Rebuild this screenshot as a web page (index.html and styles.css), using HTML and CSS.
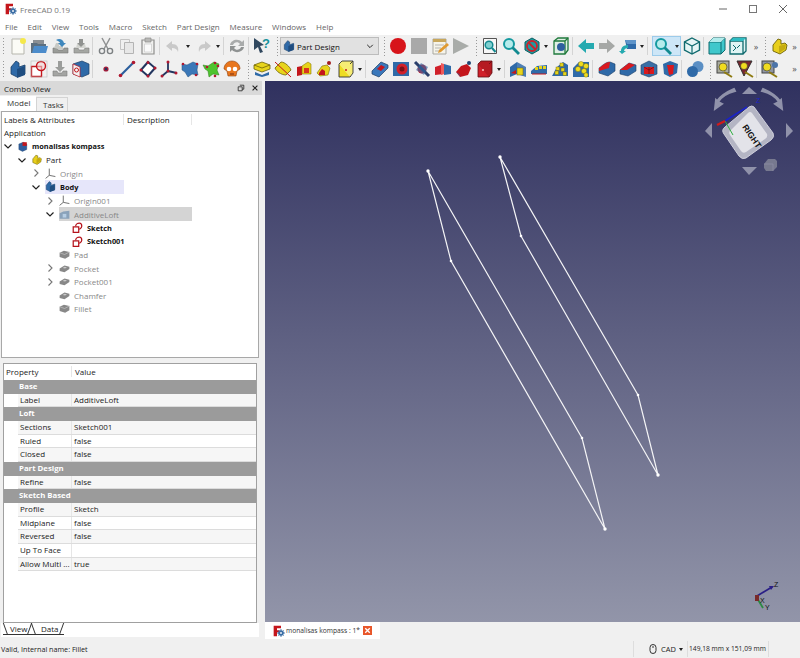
FILE: index.html
```html
<!DOCTYPE html>
<html lang="en">
<head>
<meta charset="utf-8">
<title>FreeCAD 0.19</title>
<link rel="stylesheet" href="styles.css">
</head>
<body>
<svg class="sprite" xmlns="http://www.w3.org/2000/svg">
  <defs>
    <symbol id="logo" viewBox="0 0 18 18"><path d="M1 1h11v4H6v3h4v3H6v6H1z" fill="#c4161c"/><circle cx="12" cy="12" r="4.2" fill="#3a6ea5"/><circle cx="12" cy="12" r="1.6" fill="#e8eef5"/><path d="M12 6v12M6 12h12M8 8l8 8M16 8l-8 8" stroke="#3a6ea5" stroke-width="1.3"/><circle cx="12" cy="12" r="1.5" fill="#e8eef5"/></symbol>
    <symbol id="new" viewBox="0 0 18 18"><path d="M3 2h10l2 2v13H3z" fill="#fbfbf6" stroke="#b5b5ad"/><circle cx="14" cy="4" r="3" fill="#f5e84a"/></symbol>
    <symbol id="open" viewBox="0 0 18 18"><path d="M3 3h11v4H3z" fill="#8a8f94"/><path d="M1 6h6l1 1h8v9H1z" fill="#5c6f80"/><path d="M2 16l2-7h14l-2 7z" fill="#4c8ccb"/></symbol>
    <symbol id="save" viewBox="0 0 18 18"><path d="M2 11h4l1 2h5l1-2h4v5H2z" fill="#9a9c98" stroke="#777"  stroke-width=".6"/><path d="M3 11l2-5h3v3h4v3H7z" fill="#c9cac6"/><path d="M5 3c3-2 7-1 8 3h2l-4 4-4-4h2c0-1-2-2-4-3z" fill="#3f87bd"/></symbol>
    <symbol id="saveas" viewBox="0 0 18 18"><path d="M2 11h4l1 2h5l1-2h4v5H2z" fill="#a5a7a3" stroke="#808080" stroke-width=".6"/><path d="M4 11l1-4h8l1 4z" fill="#d3d4d0"/><path d="M7 2h4v4h2l-4 4-4-4h2z" fill="#909290"/></symbol>
    <symbol id="cut" viewBox="0 0 18 18"><path d="M5 1l6 11M13 1l-6 11" stroke="#8f9192" stroke-width="1.5" fill="none"/><circle cx="5" cy="14" r="2.6" fill="none" stroke="#7d8183" stroke-width="1.4"/><circle cx="13" cy="14" r="2.6" fill="none" stroke="#7d8183" stroke-width="1.4"/></symbol>
    <symbol id="copy" viewBox="0 0 18 18"><path d="M2.500 2.500h9v10h-9z" fill="#f0f0f0" stroke="#c4c4c4"/><path d="M6.500 5.500h9v11h-9z" fill="#e7e7e7" stroke="#b4b4b4"/></symbol>
    <symbol id="paste" viewBox="0 0 18 18"><path d="M3 3h12v14H3z" fill="#f1f1ef" stroke="#8e8e8c" stroke-width="1.200"/><path d="M6 1h6v4H6z" fill="#b8b8b6" stroke="#8e8e8c" stroke-width=".7"/><path d="M5.500 7h7v8h-7z" fill="#fafafa" stroke="#c4c4c4" stroke-width=".6"/></symbol>
    <symbol id="undo" viewBox="0 0 18 18"><path d="M8 4L2 9l6 5v-3c3 0 5 1 6 4 1-5-1-8-6-8z" fill="#c9c9c9"/></symbol>
    <symbol id="redo" viewBox="0 0 18 18"><path d="M10 4l6 5-6 5v-3c-3 0-5 1-6 4-1-5 1-8 6-8z" fill="#c9c9c9"/></symbol>
    <symbol id="refresh" viewBox="0 0 18 18"><path d="M2 8c1-5 8-7 12-3l2-2v6h-6l2-2c-2-3-6-2-7 1z" fill="#a9abab"/><path d="M16 10c-1 5-8 7-12 3l-2 2V9h6l-2 2c2 3 6 2 7-1z" fill="#8f9292"/></symbol>
    <symbol id="what" viewBox="0 0 18 18"><path d="M1 1l10 7-4 1 3 6-3 1-2-6-4 3z" fill="#30475e"/><text x="9" y="11" class="qm">?</text></symbol>
    <symbol id="record" viewBox="0 0 18 18"><circle cx="9" cy="9" r="8" fill="#d7141a"/></symbol>
    <symbol id="stop" viewBox="0 0 18 18"><rect x="1" y="1" width="16" height="16" fill="#a9a9a9"/></symbol>
    <symbol id="macro" viewBox="0 0 18 18"><path d="M2 2h13v15H2z" fill="#f6f4ea" stroke="#a9a8a0"/><path d="M2 2h13v3H2z" fill="#c8a75c"/><path d="M4 8h9M4 11h6M4 14h5" stroke="#b5b5b0"/><path d="M8 13l8-7 2 2-8 7-3 1z" fill="#e09a30"/></symbol>
    <symbol id="play" viewBox="0 0 18 18"><path d="M1 1l16 8-16 8z" fill="#a9aca9"/></symbol>
    <symbol id="fitall" viewBox="0 0 18 18"><path d="M2.500 1.500h13v15h-13z" fill="#f7f7f7" stroke="#555"/><circle cx="8" cy="8" r="3.800" fill="#7fd0d0" stroke="#128a90" stroke-width="1.500"/><path d="M11 11l3.500 4" stroke="#128a90" stroke-width="2"/></symbol>
    <symbol id="mag" viewBox="0 0 18 18"><circle cx="7" cy="7" r="5" fill="#b6ecec" stroke="#159aa0" stroke-width="2"/><path d="M10.500 10.500L17 17" stroke="#128a90" stroke-width="2.800"/></symbol>
    <symbol id="draw" viewBox="0 0 18 18"><path d="M9 1l7 4v8l-7 4-7-4V5z" fill="#1b9ba0" stroke="#0c5f62"/><circle cx="9" cy="9" r="5" fill="none" stroke="#c9232c" stroke-width="1.800"/><path d="M5.500 5.500l7 7" stroke="#c9232c" stroke-width="1.800"/></symbol>
    <symbol id="bbox" viewBox="0 0 18 18"><path d="M2 4l4-3h10v12l-3 4H2z" fill="#e0efe4" stroke="#1f7a3c" stroke-width="1.300"/><path d="M2 4h11v13M13 4l3-3" fill="none" stroke="#1f7a3c" stroke-width="1.300"/><circle cx="9" cy="10" r="4" fill="#2f5f9f"/></symbol>
    <symbol id="back" viewBox="0 0 18 18"><path d="M1 9l8-7v4h8v6H9v4z" fill="#25aab0"/></symbol>
    <symbol id="fwd" viewBox="0 0 18 18"><path d="M17 9L9 2v4H1v6h8v4z" fill="#a6a8a6"/></symbol>
    <symbol id="home" viewBox="0 0 18 18"><path d="M6 3h11v9H8z" fill="#2f6aa8"/><path d="M6 3l2 4h9V3z" fill="#5e94c9"/><path d="M9 8c-4 0-7 2-7 6H0l3 3 4-3H5c0-2 2-3 4-3z" fill="#25aab0"/></symbol>
    <symbol id="iso" viewBox="0 0 18 18"><path d="M9 1l7.500 4v8L9 17l-7.500-4V5z" fill="#e6f5f5" stroke="#0f6a6e" stroke-width="1.400"/><path d="M1.500 5L9 9l7.500-4M9 9v8" fill="none" stroke="#0f6a6e" stroke-width="1.200"/></symbol>
    <symbol id="front" viewBox="0 0 18 18"><path d="M1 5l4-4h12v12l-4 4H1z" fill="#40c8cc" stroke="#0f6a6e"/><path d="M1 5h12v12M13 5l4-4" fill="none" stroke="#0f6a6e"/><path d="M1 5l4-4h12l-4 4z" fill="#b2ecec"/></symbol>
    <symbol id="top" viewBox="0 0 18 18"><path d="M1 4h13v13H1zM1 4l3-3h13v13l-3 3" fill="#dff4f4" stroke="#0f6a6e" stroke-width="1.300"/><path d="M1 4l3-3h13l-3 3z" fill="#2fbcc2"/><path d="M4 8l3 3-3 3M11 8l-3 3" fill="none" stroke="#0f6a6e"/></symbol>
    <symbol id="part" viewBox="0 0 18 18"><path d="M3 8l5-6 3 1v4l4-1 2 2-1 5-6 4-7-3z" fill="#e8cf1c" stroke="#6e6208" stroke-width=".9"/><path d="M9 9l7-2-1 5-6 4z" fill="#c4ab10"/></symbol>
    <symbol id="body" viewBox="0 0 18 18"><path d="M2 7l5-6 3 2v4l6-2v9l-8 3-6-3z" fill="#2f6aa8" stroke="#1c3f66" stroke-width=".8"/><path d="M8 9l8-3v9l-8 3z" fill="#1f4d80"/></symbol>
    <symbol id="sketch" viewBox="0 0 18 18"><path d="M1.500 6.500h10v10h-10z" fill="#fff" stroke="#c4161c" stroke-width="1.400"/><circle cx="11" cy="6" r="4.500" fill="#f4d4d4" fill-opacity=".6" stroke="#c4161c" stroke-width="1.400"/><rect x="1" y="1" width="16" height="16" fill="none" stroke="#bbb" stroke-width=".6"/></symbol>
    <symbol id="sk" viewBox="0 0 18 18"><path d="M2 8h9v9H2z" fill="#fff" stroke="#b5121b" stroke-width="2"/><path d="M6 7c0-3 3-5 6-5s4 3 4 5-2 4-4 5" fill="none" stroke="#b5121b" stroke-width="2"/></symbol>
    <symbol id="imp" viewBox="0 0 18 18"><path d="M2 11h4l1 2h4l1-2h4v5H2z" fill="#a4a5a3" stroke="#7c7c7c" stroke-width=".6"/><path d="M7 1h4v6h3l-5 5-5-5h3z" fill="#9b9d9b"/></symbol>
    <symbol id="binder" viewBox="0 0 18 18"><path d="M1 4l9-3 7 3v10l-7 3-9-3z" fill="#2f6aa8" stroke="#1c3f66" stroke-width=".7"/><path d="M1 4l7 3v10l-7-3z" fill="#f2f2f2" stroke="#c4161c" stroke-width=".7"/><circle cx="4.500" cy="10" r="2" fill="none" stroke="#c4161c"/></symbol>
    <symbol id="pt" viewBox="0 0 18 18"><circle cx="9" cy="9" r="2.600" fill="#a31d3a"/><circle cx="9" cy="9" r="1.200" fill="#23365f"/></symbol>
    <symbol id="ln" viewBox="0 0 18 18"><path d="M2 16L16 2" stroke="#2b5e9c" stroke-width="2.200"/><circle cx="2.500" cy="15.500" r="1.800" fill="#b01830"/><circle cx="15.500" cy="2.500" r="1.800" fill="#b01830"/></symbol>
    <symbol id="pl" viewBox="0 0 18 18"><path d="M9 2l7 6-7 8-7-6z" fill="#fff" stroke="#23365f" stroke-width="2"/><circle cx="9" cy="2.500" r="1.500" fill="#b01830"/><circle cx="16" cy="8" r="1.500" fill="#b01830"/><circle cx="9" cy="16" r="1.500" fill="#b01830"/><circle cx="2" cy="10" r="1.500" fill="#b01830"/></symbol>
    <symbol id="cs" viewBox="0 0 18 18"><path d="M8 1.500V11L1.500 16.500M8 11l8.500 2" fill="none" stroke="#23365f" stroke-width="1.800"/><circle cx="8" cy="2" r="1.500" fill="#b01830"/><circle cx="8" cy="11" r="1.500" fill="#b01830"/><circle cx="2" cy="16" r="1.500" fill="#b01830"/><circle cx="16" cy="13" r="1.500" fill="#b01830"/></symbol>
    <symbol id="clone1" viewBox="0 0 18 18"><path d="M1 4l5 1 6-3 5 2-1 6 1 5-6-1-4 3-3-5-3-2z" fill="#3b78b8" stroke="#23507e" stroke-width=".5"/><circle cx="2" cy="4" r="1.300" fill="#b01830"/><circle cx="16" cy="4" r="1.300" fill="#b01830"/><circle cx="15" cy="15" r="1.300" fill="#b01830"/></symbol>
    <symbol id="clone2" viewBox="0 0 18 18"><path d="M1 5l5 1 6-4 5 2-2 6 2 5-6-1-4 3-1-6-3-2z" fill="#4ec42e" stroke="#2b7a18" stroke-width=".5"/><circle cx="13" cy="3" r="1.300" fill="#b01830"/><circle cx="16" cy="6" r="1.300" fill="#b01830"/><circle cx="5" cy="7" r="1.300" fill="#b01830"/><circle cx="13" cy="16" r="1.300" fill="#b01830"/></symbol>
    <symbol id="clone3" viewBox="0 0 18 18"><path d="M9 1c5 0 8 4 8 8l-3 2-1 5H5l-1-5-3-2c0-4 3-8 8-8z" fill="#e8761d" stroke="#8e4310" stroke-width=".6"/><circle cx="6" cy="9" r="2.300" fill="#fff"/><circle cx="12" cy="9" r="2.300" fill="#fff"/><path d="M7 14h4" stroke="#7a2f10"/></symbol>
    <symbol id="pad" viewBox="0 0 18 18"><path d="M1 5l8-3 8 3v4l-8 3-8-3z" fill="#e7d41b" stroke="#6d6208" stroke-width=".8"/><path d="M1 5l8 3 8-3" fill="none" stroke="#6d6208" stroke-width=".8"/><path d="M2 12l7 3 7-3v3l-7 2-7-2z" fill="#2f6aa8"/></symbol>
    <symbol id="rev" viewBox="0 0 18 18"><path d="M1 8l6-6c4 0 9 5 10 8l-5 5c-5 0-10-4-11-7z" fill="#e7d41b" stroke="#6d6208" stroke-width=".8"/><path d="M1 2l16 15" stroke="#c4161c"/></symbol>
    <symbol id="lft" viewBox="0 0 18 18"><path d="M2 7l5-1v9l-5 1z" fill="#c4161c"/><path d="M7 6l6-4 3 2v10H7z" fill="#e7d41b" stroke="#8a7a08" stroke-width=".6"/><rect x="9" y="8" width="5" height="5" fill="#d9361f"/></symbol>
    <symbol id="pipe" viewBox="0 0 18 18"><path d="M1 13l5-7 5-1 3 3-2 7-8 1z" fill="#e7d41b" stroke="#7a6c08" stroke-width=".6"/><path d="M3 13l3-4 3 2v4H3z" fill="#c4161c"/><circle cx="13" cy="3" r="2" fill="#a31d1d"/></symbol>
    <symbol id="prim" viewBox="0 0 18 18"><path d="M2 4h11v13H2z" fill="#eedc21" stroke="#333" stroke-width=".9"/><path d="M2 4l3-3h11v12l-3 4M13 4l3-3" fill="#f6ec74" stroke="#333" stroke-width=".9"/><circle cx="9" cy="10" r="1" fill="#c4161c"/></symbol>
    <symbol id="pock" viewBox="0 0 18 18"><path d="M1 11l9-9 7 3v3l-9 9-7-3z" fill="#3a78bb" stroke="#1c3f66" stroke-width=".7"/><path d="M6 9l4-4 4 2-4 4z" fill="#c4161c"/></symbol>
    <symbol id="hole" viewBox="0 0 18 18"><rect x="1" y="2" width="16" height="14" fill="#2f6aa8"/><circle cx="10" cy="9" r="5.500" fill="#d0202a"/><circle cx="10" cy="9" r="2.500" fill="#7a1018"/></symbol>
    <symbol id="grv" viewBox="0 0 18 18"><circle cx="9" cy="9" r="4.500" fill="#d0202a"/><path d="M2 2l14 14" stroke="#2b3f6b" stroke-width="3"/><path d="M3 10l5-7 7 4-4 8z" fill="#2f6aa8" fill-opacity=".6"/></symbol>
    <symbol id="slft" viewBox="0 0 18 18"><path d="M1 7l9-3v10l-9 1z" fill="#d0202a"/><path d="M10 4l7 2v8l-7 1z" fill="#2f6aa8"/><path d="M7 3l3 1v10l-3 1z" fill="#ee5a5a"/></symbol>
    <symbol id="spipe" viewBox="0 0 18 18"><path d="M1 12l5-6 6-2 4 4-3 7-8 2z" fill="#c4161c"/><path d="M1 12l3 2 2 3z" fill="#2f6aa8"/><circle cx="14" cy="3" r="2" fill="#1e4573"/></symbol>
    <symbol id="sprim" viewBox="0 0 18 18"><path d="M2 4h11v13H2z" fill="#d0202a" stroke="#601015" stroke-width=".8"/><path d="M2 4l3-3h11v12l-3 4M13 4l3-3" fill="#b51a22" stroke="#601015" stroke-width=".8"/><circle cx="7" cy="10" r="1.100" fill="#f6b9b9"/></symbol>
    <symbol id="mirr" viewBox="0 0 18 18"><path d="M1 7l7-5v12l-7 3z" fill="#2f6aa8"/><path d="M8 2l9 5v10l-9-3z" fill="#4d7fb5"/><rect x="8" y="8" width="6" height="7" fill="#e7d41b" stroke="#6d6208" stroke-width=".5"/><path d="M2 13l5-3v4z" fill="#c4161c"/></symbol>
    <symbol id="lin" viewBox="0 0 18 18"><path d="M1 11l6-5 10-1v9H1z" fill="#2f6aa8"/><rect x="5" y="7" width="3" height="3" fill="#e7d41b"/><rect x="9" y="6" width="3" height="3" fill="#e7d41b"/><rect x="13" y="6" width="3" height="3" fill="#e7d41b"/><path d="M2 14h14" stroke="#c4161c"/></symbol>
    <symbol id="pol" viewBox="0 0 18 18"><path d="M1 16l5-9 6-5 5 3v11z" fill="#2f6aa8"/><g fill="#e7d41b" stroke="#6d6208" stroke-width=".4"><rect x="9" y="3" width="3.500" height="3.500"/><rect x="5" y="7" width="3.500" height="3.500"/><rect x="10" y="8" width="3.500" height="3.500"/><rect x="4" y="11" width="3.500" height="3.500"/><rect x="12" y="12" width="3.500" height="3.500"/></g></symbol>
    <symbol id="multi" viewBox="0 0 18 18"><path d="M1 8l6-6h10v15H1z" fill="#2f6aa8"/><g fill="#f0dc1f" stroke="#6d6208" stroke-width=".4"><circle cx="9" cy="4" r="2.600"/><circle cx="14" cy="6" r="2.600"/><circle cx="6" cy="9" r="2.600"/><circle cx="12" cy="11" r="2.600"/><circle cx="14" cy="15" r="2.200"/></g></symbol>
    <symbol id="fil" viewBox="0 0 18 18"><path d="M1 8c2-1 6-6 11-6l5 2v7l-7 5-9-3z" fill="#2f6aa8" stroke="#1c3f66" stroke-width=".6"/><path d="M1 8c2-1 6-6 11-6l-1 6-10 3z" fill="#d9191f"/></symbol>
    <symbol id="chm" viewBox="0 0 18 18"><path d="M1 10l9-7 7 2v6l-8 5-8-2z" fill="#2f6aa8" stroke="#1c3f66" stroke-width=".6"/><path d="M1 10l9-7 6 2-8 5z" fill="#d9191f"/></symbol>
    <symbol id="drf" viewBox="0 0 18 18"><path d="M9 1l8 4v9l-8 3-8-3V5z" fill="#3a6ea5" stroke="#1c3f66" stroke-width=".6"/><path d="M4 7h10v7H4z" fill="#d9191f"/><path d="M9 7v7M4 7l5 3 5-3" stroke="#601015" fill="none" stroke-width=".7"/></symbol>
    <symbol id="thk" viewBox="0 0 18 18"><path d="M2 4l7-3 8 3-1 9-7 4-6-3z" fill="#2f6aa8"/><path d="M6 5h7l-1 9-4 1z" fill="#d9191f"/></symbol>
    <symbol id="bool" viewBox="0 0 18 18"><circle cx="12" cy="6.500" r="5.500" fill="#5b8fc4"/><circle cx="6.500" cy="11.500" r="5.500" fill="#2f6aa8"/></symbol>
    <symbol id="m1" viewBox="0 0 18 18"><rect x="2" y="1" width="12" height="12" fill="#a8aa9e" stroke="#444"/><circle cx="8" cy="7" r="4" fill="#f0dc1f" stroke="#333" stroke-width=".6"/><path d="M9 12l8 5" stroke="#8e7a10" stroke-width="2"/></symbol>
    <symbol id="m2" viewBox="0 0 18 18"><path d="M1 1h15L8 16z" fill="#7a2630" stroke="#333"/><circle cx="8" cy="6" r="3.500" fill="#f0dc1f" stroke="#333" stroke-width=".6"/><path d="M9 12l8 5" stroke="#8e7a10" stroke-width="2"/></symbol>
    <symbol id="m3" viewBox="0 0 18 18"><rect x="1" y="1" width="12" height="12" fill="#8f96a5" stroke="#444"/><circle cx="14" cy="5" r="3" fill="#4c74a8"/><circle cx="6" cy="7" r="4" fill="#f0dc1f" stroke="#333" stroke-width=".6"/><path d="M8 12l8 5" stroke="#8e7a10" stroke-width="2"/></symbol>
    <symbol id="docu" viewBox="0 0 18 18"><path d="M3 5l7-3 6 3v9l-7 3-6-3z" fill="#2f5f9f" stroke="#1c3f66" stroke-width=".6"/><path d="M9 2h7v6H9z" fill="#c4161c"/></symbol>
    <symbol id="origin" viewBox="0 0 18 18"><path d="M7 1v11M7 12l-6 5M7 12l10 2" fill="none" stroke="#666" stroke-width="1.500"/></symbol>
    <symbol id="pd" viewBox="0 0 18 18"><path d="M1 6l7-3 9 2v7l-7 4-9-3z" fill="#888"/><path d="M1 6l8 3 8-4" fill="none" stroke="#ccc"/></symbol>
    <symbol id="pdp" viewBox="0 0 18 18"><path d="M1 9l8-5 8 2v4l-8 5-8-2z" fill="#888"/><path d="M6 8l3-2 4 1-3 2z" fill="#c8c8c8"/></symbol>
    <symbol id="loft" viewBox="0 0 18 18"><path d="M1 7l6-3 10-1v13H1z" fill="#8aa2ba"/><path d="M6 8h6v6H6z" fill="#b7cee4"/></symbol>
    <symbol id="cr" viewBox="0 0 10 10"><path d="M3.500 1.500L7 5 3.500 8.500" fill="none" stroke="#777" stroke-width="1.100"/></symbol>
    <symbol id="cd" viewBox="0 0 10 10"><path d="M1.500 3.500L5 7l3.500-3.500" fill="none" stroke="#222" stroke-width="1.200"/></symbol>
  </defs>
</svg>

<header class="titlebar">
  <svg class="logo"><use href="#logo"/></svg>
  <span class="apptitle">FreeCAD 0.19</span>
  <div class="winctl">
    <svg class="wc" viewBox="0 0 10 10"><path d="M1 5h8" stroke="#666"/></svg>
    <svg class="wc" viewBox="0 0 10 10"><rect x="1.500" y="1.500" width="7" height="7" fill="none" stroke="#777"/></svg>
    <svg class="wc" viewBox="0 0 10 10"><path d="M1 1l8 8M9 1l-8 8" stroke="#666"/></svg>
  </div>
</header>
<nav class="menubar">
  <span>File</span><span>Edit</span><span>View</span><span>Tools</span><span>Macro</span><span>Sketch</span><span>Part Design</span><span>Measure</span><span>Windows</span><span>Help</span>
</nav>

<div class="toolbar row1">
  <span class="handle"></span>
  <span class="tb"><svg><use href="#new"/></svg></span><span class="tb"><svg><use href="#open"/></svg></span><span class="tb"><svg><use href="#save"/></svg></span><span class="tb"><svg><use href="#saveas"/></svg></span>
  <span class="sep"></span>
  <span class="tb"><svg><use href="#cut"/></svg></span><span class="tb"><svg><use href="#copy"/></svg></span><span class="tb"><svg><use href="#paste"/></svg></span>
  <span class="sep"></span>
  <span class="tb"><svg><use href="#undo"/></svg></span><span class="dd w10"></span><span class="tb"><svg><use href="#redo"/></svg></span><span class="dd"></span>
  <span class="sep"></span>
  <span class="tb"><svg><use href="#refresh"/></svg></span>
  <span class="sep"></span>
  <span class="tb"><svg><use href="#what"/></svg></span>
  <span class="grip g8"></span>
  <div class="combo"><svg class="cicon"><use href="#body"/></svg><span>Part Design</span><svg class="cchev"><use href="#cd"/></svg></div>
  <span class="grip g8"></span>
  <span class="tb"><svg><use href="#record"/></svg></span><span class="tb"><svg><use href="#stop"/></svg></span><span class="tb"><svg><use href="#macro"/></svg></span><span class="tb"><svg><use href="#play"/></svg></span>
  <span class="grip g8"></span>
  <span class="tb"><svg><use href="#fitall"/></svg></span><span class="tb"><svg><use href="#mag"/></svg></span><span class="tb"><svg><use href="#draw"/></svg></span><span class="dd"></span><span class="tb"><svg><use href="#bbox"/></svg></span>
  <span class="sep"></span>
  <span class="tb"><svg><use href="#back"/></svg></span><span class="tb"><svg><use href="#fwd"/></svg></span><span class="tb"><svg><use href="#home"/></svg></span><span class="dd"></span>
  <span class="sep s6"></span>
  <span class="hot"><span class="tb"><svg><use href="#mag"/></svg></span><span class="dd"></span></span>
  <span class="tb"><svg><use href="#iso"/></svg></span>
  <span class="sep"></span>
  <span class="tb"><svg><use href="#front"/></svg></span><span class="tb"><svg><use href="#top"/></svg></span>
  <span class="more w16">»</span>
  <span class="grip g4"></span>
  <span class="tb"><svg><use href="#part"/></svg></span>
  <span class="more">»</span>
</div>

<div class="toolbar row2">
  <span class="handle"></span>
  <span class="tb"><svg><use href="#body"/></svg></span><span class="tb"><svg><use href="#sketch"/></svg></span><span class="tb"><svg><use href="#imp"/></svg></span><span class="tb"><svg><use href="#binder"/></svg></span>
  <span class="sep"></span>
  <span class="tb"><svg><use href="#pt"/></svg></span><span class="tb"><svg><use href="#ln"/></svg></span><span class="tb"><svg><use href="#pl"/></svg></span><span class="tb"><svg><use href="#cs"/></svg></span><span class="tb"><svg><use href="#clone1"/></svg></span><span class="tb"><svg><use href="#clone2"/></svg></span><span class="tb"><svg><use href="#clone3"/></svg></span>
  <span class="grip g9"></span>
  <span class="tb"><svg><use href="#pad"/></svg></span><span class="tb"><svg><use href="#rev"/></svg></span><span class="tb"><svg><use href="#lft"/></svg></span><span class="tb"><svg><use href="#pipe"/></svg></span><span class="tb"><svg><use href="#prim"/></svg></span><span class="dd"></span>
  <span class="sep s5"></span>
  <span class="tb"><svg><use href="#pock"/></svg></span><span class="tb"><svg><use href="#hole"/></svg></span><span class="tb"><svg><use href="#grv"/></svg></span><span class="tb"><svg><use href="#slft"/></svg></span><span class="tb"><svg><use href="#spipe"/></svg></span><span class="tb"><svg><use href="#sprim"/></svg></span><span class="dd"></span>
  <span class="sep"></span>
  <span class="tb"><svg><use href="#mirr"/></svg></span><span class="tb"><svg><use href="#lin"/></svg></span><span class="tb"><svg><use href="#pol"/></svg></span><span class="tb"><svg><use href="#multi"/></svg></span>
  <span class="sep s5"></span>
  <span class="tb"><svg><use href="#fil"/></svg></span><span class="tb"><svg><use href="#chm"/></svg></span><span class="tb"><svg><use href="#drf"/></svg></span><span class="tb"><svg><use href="#thk"/></svg></span>
  <span class="sep"></span>
  <span class="tb"><svg><use href="#bool"/></svg></span>
  <span class="grip g8"></span>
  <span class="tb"><svg><use href="#m1"/></svg></span><span class="tb"><svg><use href="#m2"/></svg></span><span class="sep"></span><span class="tb"><svg><use href="#m3"/></svg></span>
  <span class="more end">»</span>
</div>

<main class="main">
  <aside class="dock">
    <div class="docktitle"><span>Combo View</span><span class="dockbtns"><svg class="dk" viewBox="0 0 10 10"><path d="M3.500 1.500h5v5h-2M1.500 3.500h5v5h-5z" fill="none" stroke="#222"/></svg><svg class="dk" viewBox="0 0 10 10"><path d="M2 2l6 6M8 2l-6 6" stroke="#222" stroke-width="1.400"/></svg></span></div>
    <div class="tabs"><span class="tab on">Model</span><span class="tab off">Tasks</span></div>
    <section class="tree">
      <div class="treehead"><span class="hcol1">Labels &amp; Attributes</span><span class="hcol2">Description</span></div>
      <div class="rw l-1"><span class="lbl">Application</span></div>
      <div class="rw l0"><svg class="ar"><use href="#cd"/></svg><span class="cell b"><svg class="ti"><use href="#docu"/></svg>monalisas kompass</span></div>
      <div class="rw l1"><svg class="ar"><use href="#cd"/></svg><span class="cell"><svg class="ti"><use href="#part"/></svg>Part</span></div>
      <div class="rw l2"><svg class="ar"><use href="#cr"/></svg><span class="cell dim"><svg class="ti"><use href="#origin"/></svg>Origin</span></div>
      <div class="rw l2 w1"><svg class="ar"><use href="#cd"/></svg><span class="cell b act"><svg class="ti"><use href="#body"/></svg>Body</span></div>
      <div class="rw l3"><svg class="ar"><use href="#cr"/></svg><span class="cell dim"><svg class="ti"><use href="#origin"/></svg>Origin001</span></div>
      <div class="rw l3 w2"><svg class="ar"><use href="#cd"/></svg><span class="cell dim sel"><svg class="ti"><use href="#loft"/></svg>AdditiveLoft</span></div>
      <div class="rw l4"><span class="ar"></span><span class="cell b"><svg class="ti"><use href="#sk"/></svg>Sketch</span></div>
      <div class="rw l4"><span class="ar"></span><span class="cell b"><svg class="ti"><use href="#sk"/></svg>Sketch001</span></div>
      <div class="rw l3"><span class="ar"></span><span class="cell dim"><svg class="ti"><use href="#pd"/></svg>Pad</span></div>
      <div class="rw l3"><svg class="ar"><use href="#cr"/></svg><span class="cell dim"><svg class="ti"><use href="#pdp"/></svg>Pocket</span></div>
      <div class="rw l3"><svg class="ar"><use href="#cr"/></svg><span class="cell dim"><svg class="ti"><use href="#pdp"/></svg>Pocket001</span></div>
      <div class="rw l3"><span class="ar"></span><span class="cell dim"><svg class="ti"><use href="#pdp"/></svg>Chamfer</span></div>
      <div class="rw l3"><span class="ar"></span><span class="cell dim"><svg class="ti"><use href="#pd"/></svg>Fillet</span></div>
    </section>
    <section class="props">
      <div class="phead"><span class="pn">Property</span><span class="pv">Value</span></div>
      <div class="grp">Base</div>
      <div class="prow alt"><span class="pname">Label</span><span class="pval">AdditiveLoft</span></div>
      <div class="grp">Loft</div>
      <div class="prow alt"><span class="pname">Sections</span><span class="pval">Sketch001</span></div>
      <div class="prow"><span class="pname">Ruled</span><span class="pval">false</span></div>
      <div class="prow alt"><span class="pname">Closed</span><span class="pval">false</span></div>
      <div class="grp">Part Design</div>
      <div class="prow alt"><span class="pname">Refine</span><span class="pval">false</span></div>
      <div class="grp">Sketch Based</div>
      <div class="prow alt"><span class="pname">Profile</span><span class="pval">Sketch</span></div>
      <div class="prow"><span class="pname">Midplane</span><span class="pval">false</span></div>
      <div class="prow alt"><span class="pname">Reversed</span><span class="pval">false</span></div>
      <div class="prow"><span class="pname">Up To Face</span><span class="pval"></span></div>
      <div class="prow alt"><span class="pname">Allow Multi ...</span><span class="pval">true</span></div>
    </section>
    <div class="subtabs"><span class="st sv">View</span><span class="st sd">Data</span></div>
  </aside>
  <div class="viewwrap">
    <div class="viewport">
      <svg class="canvas" viewBox="265 81 535 541">
        <g fill="none" stroke="#f4f4f6" stroke-width="1.200">
          <path d="M428 171L451 261L605 529L582 438Z"/>
          <path d="M500 157L521 236L658 475L638 395Z"/>
        </g>
        <g fill="#fff">
          <circle cx="428" cy="171" r="1.700"/><circle cx="451" cy="261" r="1.300"/><circle cx="605" cy="529" r="1.700"/><circle cx="582" cy="438" r="1.300"/>
          <circle cx="500" cy="157" r="1.700"/><circle cx="521" cy="236" r="1.300"/><circle cx="658" cy="475" r="1.700"/><circle cx="638" cy="395" r="1.300"/>
        </g>
        <g transform="translate(690 80)">
          <g fill="#9092aa">
            <path d="M52 14L59 7L67 14Z"/><path d="M52 87L67 87L59 95Z"/><path d="M22 43L15 51L22 58Z"/><path d="M96 43L103 51L96 58Z"/>
            <path d="M45 11C37 13 31 17 28 22L32 24L25 29L26 20L27 21C31 16 37 12 44 9Z" stroke="#9092aa" stroke-width="2"/>
            <path d="M72 11C80 13 86 17 89 22L85 24L92 29L91 20L90 21C86 16 80 12 73 9Z" stroke="#9092aa" stroke-width="2"/>
          </g>
          <path d="M64 27L83 53Q85 57 81 60L56 78Q52 80 49 76L34 54Q31 50 35 47L59 27Q62 25 64 27Z" fill="#b4b5c4" stroke="#d0d0dc"/>
          <path d="M62 33L77 54Q78 57 75 59L56 72Q53 74 51 71L40 55Q38 52 41 50L58 33Q60 31 62 33Z" fill="#e3e3e9"/>
          <text x="0" y="0" class="cubetxt" transform="translate(52 47) rotate(56)">RIGHT</text>
          <path d="M35 41L57 27" stroke="#1a22c8" stroke-width="1.600"/>
          <path d="M35 41L43 55" stroke="#2fb040" stroke-width="1"/>
          <path d="M27 45L35 41" stroke="#d01a1a" stroke-width="2.200"/>
          <text x="66" y="23" class="axn">Z</text>
          <path d="M74 84l4-5h7l2 2v6l-4 4h-7l-2-3z" fill="#77798f"/><path d="M74 84h9v7" fill="none" stroke="#8f91a6" stroke-width=".7"/>
        </g>
        <path d="M757 596L772 587" stroke="#2a1f86" stroke-width="1.800"/><path d="M769 586l5 0-3 4z" fill="#2a1f86"/>
        <path d="M757 598L763 608" stroke="#2d8a45" stroke-width="1.800"/>
        <rect x="755" y="595" width="4" height="6" fill="#7a2a2a"/>
        <text x="774" y="587" class="axs">Z</text><text x="760" y="603" class="axs">X</text><text x="765" y="610" class="axs">Y</text>
      </svg>
    </div>
    <div class="doctabs"><span class="doctab"><svg class="dlogo"><use href="#logo"/></svg>monalisas kompass : 1*<span class="dclose"><svg viewBox="0 0 10 10"><path d="M2.500 2.500l5 5M7.500 2.500l-5 5" stroke="#fff" stroke-width="1.500"/></svg></span></span></div>
  </div>
</main>

<footer class="status">
  <span class="msg">Valid, Internal name: Fillet</span>
  <span class="nav"><svg class="mouse" viewBox="0 0 10 12"><rect x="2" y="1.500" width="6" height="9" rx="3" fill="none" stroke="#333"/><path d="M5 3v2" stroke="#333"/></svg>CAD<i class="tri"></i></span>
  <span class="dims">149,18 mm x 151,09 mm</span>
</footer>
</body>
</html>
```

FILE: styles.css
```css
* { box-sizing: border-box; }
html, body { margin: 0; padding: 0; }
body {
  width: 800px;
  height: 658px;
  overflow: hidden;
  background: #f0f0f0;
  font-family: "Open Sans", "Noto Sans", sans-serif;
  font-size: 8px;
  color: #222;
  display: flex;
  flex-direction: column;
}
.sprite { width: 0; height: 0; position: absolute; }

.titlebar { height: 18px; flex: none; background: #fff; display: flex; align-items: center; padding-left: 5px; }
.logo { width: 12px; height: 12px; margin-right: 3px; }
.apptitle { color: #777; font-size: 8px; }
.winctl { margin-left: auto; display: flex; gap: 20px; padding-right: 12px; }
.wc { width: 10px; height: 10px; }

.menubar { height: 17px; flex: none; background: #fff; display: flex; align-items: center; padding-left: 5px; gap: 9.9px; color: #666; font-size: 8px; }

.toolbar { display: flex; align-items: center; background: #f0f0f0; flex: none; }
.row1 { height: 22px; }
.row2 { height: 23px; }
.handle { width: 7px; height: 18px; flex: none; background: radial-gradient(circle, #999 0.6px, transparent 0.8px) 2px 0 / 3px 3px repeat-y; }
.tb { width: 21px; height: 20px; display: flex; align-items: center; justify-content: center; flex: none; }
.tb svg { width: 18px; height: 18px; }
.dd { width: 8px; height: 20px; flex: none; position: relative; }
.dd::after { content: ""; position: absolute; left: 2px; top: 9px; border-left: 2.500px solid transparent; border-right: 2.500px solid transparent; border-top: 3px solid #222; }
.w10 { width: 10px; }
.w10::after { left: 3px; }
.sep { width: 4px; height: 18px; flex: none; position: relative; }
.sep::after { content: ""; position: absolute; left: 1px; top: 0; bottom: 0; width: 1px; background: #d4d4d4; }
.s5 { width: 5px; }
.s6 { width: 6px; }
.grip { height: 20px; flex: none; position: relative; }
.grip::after { content: ""; position: absolute; right: 1px; top: 0; width: 3px; height: 20px; background: radial-gradient(circle, #999 0.6px, transparent 0.8px) 0 0 / 3px 3px repeat-y; }
.g4 { width: 4px; }
.g8 { width: 8px; }
.g9 { width: 9px; }
.more { width: 11px; text-align: center; color: #555; font-size: 9px; flex: none; }
.w16 { width: 16px; }
.end { margin-left: auto; }
.combo { width: 99px; height: 18px; flex: none; border: 1px solid #bcbcbc; background: #e1e1e1; display: flex; align-items: center; padding: 0 4px 0 2px; color: #111; font-size: 8px; }
.cicon { width: 12px; height: 12px; margin-right: 2px; }
.cchev { width: 8px; height: 8px; margin-left: auto; }
.hot { display: flex; background: #cde6f7; outline: 1px solid #9ccbea; outline-offset: -1px; }

.main { height: 559px; margin-top: 1px; display: flex; flex: none; }
.dock { width: 265px; flex: none; display: flex; flex-direction: column; padding-left: 2px; }
.docktitle { height: 14px; flex: none; margin-left: -2px; margin-right: 3px; background: #d9d9d9; display: flex; align-items: center; justify-content: space-between; padding-left: 4px; }
.dockbtns { display: flex; gap: 6px; padding-right: 3px; }
.dk { width: 8px; height: 8px; }
.tabs { height: 16px; flex: none; display: flex; align-items: flex-end; margin-left: -2px; }
.tab { line-height: 13px; color: #333; }
.tab.on { height: 15px; width: 36px; padding-left: 7px; background: #fff; line-height: 14px; }
.tab.off { height: 14px; width: 32px; padding-left: 6px; background: #f0f0f0; border: 1px solid #d4d4d4; border-bottom: 0; }
.tree { width: 258px; height: 247px; margin-left: -1px; border: 1px solid #a8a8a8; background: #fff; flex: none; }
.treehead { height: 14px; display: flex; align-items: center; }
.hcol1 { width: 122px; padding-left: 2px; border-right: 1px solid #e6e6e6; }
.hcol2 { width: 68px; padding-left: 3px; border-right: 1px solid #e6e6e6; }
.rw { height: 13.55px; display: flex; align-items: center; width: 190px; color: #222; }
.lbl { padding-left: 2px; }
.l0 { padding-left: 1px; }
.l1 { padding-left: 15px; }
.l2 { padding-left: 29px; }
.l3 { padding-left: 43px; }
.l4 { padding-left: 56px; }
.ar { width: 10px; height: 10px; flex: none; display: block; margin-right: 4px; }
.cell { flex: 1; display: flex; align-items: center; height: 100%; white-space: nowrap; }
.w1 { width: 122px; }
.b { font-weight: 700; font-size: 7.4px; color: #111; }
.dim { color: #888; }
.act { background: #e6e6fa; }
.sel { background: #d4d4d4; }
.ti { width: 11px; height: 11px; margin-right: 4px; flex: none; }

.props { width: 254px; height: 260px; margin-top: 5px; margin-left: 1px; border: 1px solid #a0a0a0; background: #fff; flex: none; }
.phead { height: 16px; display: flex; align-items: center; padding-bottom: 2px; }
.pn { width: 68px; padding-left: 2px; border-right: 1px solid #e6e6e6; }
.pv { padding-left: 3px; }
.grp { height: 13.66px; line-height: 13px; background: #9b9b9b; color: #fff; font-weight: 700; font-size: 7.8px; padding-left: 15px; }
.prow { height: 13.66px; display: flex; margin-left: 14px; background: #fff; border-bottom: 1px solid #dcdcdc; line-height: 12.6px; }
.prow.alt { background: #f6f6f6; }
.pname { width: 54px; padding-left: 2px; border-right: 1px solid #e6e6e6; flex: none; white-space: nowrap; overflow: hidden; }
.pval { padding-left: 2px; }
.subtabs { width: 258px; height: 14px; background: #fff; margin-left: -1px; display: flex; padding-left: 2px; flex: none; }
.st { position: relative; height: 12px; line-height: 11px; border-bottom: 1px solid #333; flex: none; }
.sv { width: 29px; padding-left: 7px; }
.sd { width: 33px; padding-left: 10px; margin-left: -1px; }
.st::before, .st::after { content: ""; position: absolute; top: 0; bottom: -1px; width: 1px; background: #333; }
.st::before { left: 2px; transform: skewX(20deg); }
.st::after { right: 2px; transform: skewX(-20deg); }

.viewwrap { width: 535px; flex: none; display: flex; flex-direction: column; }
.viewport { height: 541px; flex: none; background: linear-gradient(#30315f, #9295a9); }
.canvas { width: 535px; height: 541px; display: block; }
.cubetxt { font-family: "Liberation Sans", sans-serif; font-size: 8.5px; font-weight: 700; fill: #111; }
.axn { font-family: "Liberation Sans", sans-serif; font-size: 7px; fill: #1a22c8; }
.axs { font-family: "Liberation Sans", sans-serif; font-size: 7px; fill: #111; }
.qm { font-family: "Liberation Sans", sans-serif; font-size: 13px; font-weight: 700; fill: #17929a; }
.doctabs { height: 18px; flex: none; }
.doctab { display: inline-flex; align-items: center; height: 17px; width: 115px; padding-left: 8px; background: #fff; color: #333; font-size: 6.7px; white-space: nowrap; }
.dlogo { width: 12px; height: 12px; margin-right: 1px; flex: none; }
.dclose { width: 9px; height: 9px; margin-left: 3px; background: #e8562a; display: block; flex: none; }
.dclose svg { display: block; width: 9px; height: 9px; }

.status { height: 18px; flex: none; display: flex; align-items: center; }
.msg { padding-left: 1px; margin-right: auto; font-size: 7.2px; }
.nav { width: 54px; height: 16px; padding-left: 27px; border-left: 1px solid #ddd; display: flex; align-items: center; position: relative; font-size: 7.5px; }
.mouse { width: 10px; height: 12px; position: absolute; left: 14px; top: 2px; }
.tri { margin-left: 3px; border-left: 2.5px solid transparent; border-right: 2.5px solid transparent; border-top: 3px solid #222; }
.dims { width: 82px; height: 16px; margin-right: 31px; padding-left: 1px; border-left: 1px solid #ddd; border-right: 1px solid #ddd; line-height: 16px; white-space: nowrap; font-size: 6.7px; }
```
